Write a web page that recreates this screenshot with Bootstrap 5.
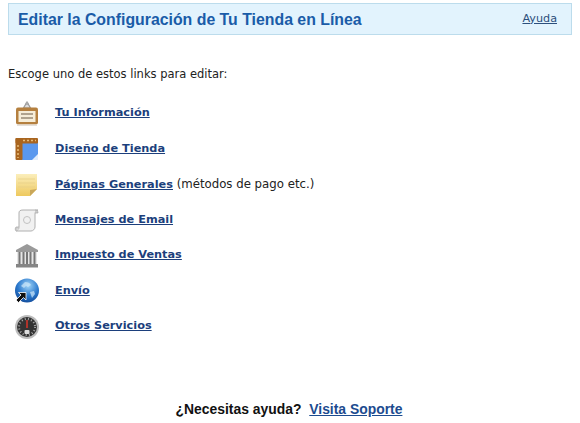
<!DOCTYPE html>
<html lang="en">
<head>
<meta charset="UTF-8">
<title>Editar la Configuración</title>
<link href="https://cdn.jsdelivr.net/npm/bootstrap@5.3.0/dist/css/bootstrap.min.css" rel="stylesheet">
<style>
body { font-family: "DejaVu Sans", sans-serif; font-size: 11.5px; color: #222; background: #fff; height: 423px; overflow: hidden; }
.page-wrap { padding: 3px 8px 0 8px; height: 423px; }
.head-box { height: 32px; background: #e2f3fd; border: 1px solid #bcdcec; padding: 0 14px 0 9px; }
.head-title { font-family: "Liberation Sans", sans-serif; font-weight: 700; font-size: 15.85px; color: #1a5ca8; margin: 0; }
.head-help { color: #2c4f7c; font-size: 11.2px; }
.intro { margin: 32px 0 0 0; line-height: 14px; }
.menu-list { margin-top: 15px; padding-left: 6px; }
.menu-row { height: 35.5px; gap: 15px; }
.menu-row svg { width: 26px; height: 26px; flex: none; }
.menu-link { font-weight: 700; font-size: 11.3px; color: #1c3f7c; }
.menu-note { font-size: 11.75px; }
.foot-line { margin-top: 54px; padding-right: 2px; font-family: "Liberation Sans", sans-serif; font-size: 13.9px; font-weight: 700; color: #111; text-align: center; }
.foot-line a { color: #1c4b8f; margin-left: 4px; }
</style>
</head>
<body>
<div class="page-wrap">
  <div class="head-box d-flex align-items-center justify-content-between">
    <h1 class="head-title">Editar la Configuración de Tu Tienda en Línea</h1>
    <a class="head-help" href="#">Ayuda</a>
  </div>
  <p class="intro">Escoge uno de estos links para editar:</p>
  <div class="menu-list">
    <div class="menu-row d-flex align-items-center">
      <svg viewBox="0 0 26 26">
        <path d="M13 1l-3.500 6h7z" fill="#ddd" stroke="#999" stroke-width="1.200"/>
        <circle cx="13" cy="2.500" r="1.600" fill="#aaa"/>
        <rect x="2" y="6.500" width="22" height="17" rx="2" fill="#b5803f"/>
        <rect x="4.500" y="10" width="17" height="11" fill="#f6edd8"/>
        <path d="M7 13h12M7 17h12" stroke="#6b5a44" stroke-width="1.200"/>
        <rect x="3" y="23.500" width="20" height="1.500" fill="#e4e0da"/>
      </svg>
      <a class="menu-link" href="#">Tu Información</a>
    </div>
    <div class="menu-row d-flex align-items-center">
      <svg viewBox="0 0 26 26">
        <rect x="7" y="6" width="17" height="18" fill="#5a98ee"/>
        <path d="M18 24l6-6v6z" fill="#e2edfb"/>
        <rect x="1.500" y="2" width="22.500" height="5.500" rx="1" fill="#a9651f"/>
        <rect x="1.500" y="2" width="7" height="22" rx="1" fill="#a9651f"/>
        <path d="M4 9v13M9 4.500h13" stroke="#e7bd7a" stroke-width="1.500" stroke-dasharray="2 2"/>
      </svg>
      <a class="menu-link" href="#">Diseño de Tienda</a>
    </div>
    <div class="menu-row d-flex align-items-center">
      <svg viewBox="0 0 26 26">
        <defs><linearGradient id="noteFill" x1="0" y1="0" x2="0" y2="1"><stop offset="0" stop-color="#fbeebb"/><stop offset="1" stop-color="#eec95e"/></linearGradient></defs>
        <path d="M2 2h21v15l-7 7H2z" fill="url(#noteFill)"/>
        <path d="M23 17l-7 7v-6z" fill="#c9a75a"/>
        <path d="M4 7h17M4 11h17M4 15h17" stroke="#e6cf86" stroke-width=".7"/>
      </svg>
      <span><a class="menu-link" href="#">Páginas Generales</a> <span class="menu-note">(métodos de pago etc.)</span></span>
    </div>
    <div class="menu-row d-flex align-items-center">
      <svg viewBox="0 0 26 26">
        <path d="M9 3h15c-2 1-3 2-3 4v13c0 2-2 4-4 4H2c2-1 3-2 3-4V6c0-2 1-3 4-3z" fill="#f1f1f1" stroke="#b0b0b0"/>
        <circle cx="13" cy="13" r="3.500" fill="none" stroke="#c2c2c2"/>
        <path d="M21 3c2 0 3 1 3 3h-3M2 24c-1-1-1-3 0-4h3" fill="#ccc" stroke="#a8a8a8" stroke-width=".7"/>
      </svg>
      <a class="menu-link" href="#">Mensajes de Email</a>
    </div>
    <div class="menu-row d-flex align-items-center">
      <svg viewBox="0 0 26 26">
        <path d="M13 1L24 7v2H2V7z" fill="#9a9a9a"/>
        <rect x="3" y="9" width="20" height="12" fill="#e6e6e6"/>
        <path d="M5.500 9v12M9.500 9v12M13 9v12M16.500 9v12M20.500 9v12" stroke="#777" stroke-width="2"/>
        <rect x="2" y="21" width="22" height="3.500" fill="#858585"/>
      </svg>
      <a class="menu-link" href="#">Impuesto de Ventas</a>
    </div>
    <div class="menu-row d-flex align-items-center">
      <svg viewBox="0 0 26 26">
        <defs><radialGradient id="globeFill" cx=".55" cy=".3" r=".8"><stop offset="0" stop-color="#9fd4f8"/><stop offset=".55" stop-color="#2a78cc"/><stop offset="1" stop-color="#0c3f8c"/></radialGradient></defs>
        <circle cx="13" cy="12.500" r="12" fill="url(#globeFill)"/>
        <path d="M11 4c3 0 5 1 6 3l-3 2-2-1-2 2-3-2zM16 14l4-1 1 3-3 4z" fill="#cfe8fa" opacity=".7"/>
        <path d="M2 22l5-5-2.500-2.500H12V22l-2.500-2.500-5 5z" fill="#111" stroke="#fff" stroke-width=".8"/>
      </svg>
      <a class="menu-link" href="#">Envío</a>
    </div>
    <div class="menu-row d-flex align-items-center">
      <svg viewBox="0 0 26 26">
        <circle cx="13" cy="13" r="12" fill="#bdbdbd"/>
        <circle cx="13" cy="13" r="10" fill="#333"/>
        <circle cx="13" cy="13" r="8" fill="none" stroke="#aaa" stroke-width="2" stroke-dasharray="1 2.200"/>
        <path d="M13 14V6" stroke="#d8352a" stroke-width="1.500"/>
        <rect x="10.500" y="16" width="5" height="4" rx="1" fill="#ddd"/>
      </svg>
      <a class="menu-link" href="#">Otros Servicios</a>
    </div>
  </div>
  <div class="foot-line">¿Necesitas ayuda? <a href="#">Visita Soporte</a></div>
</div>
<script src="https://cdn.jsdelivr.net/npm/bootstrap@5.3.0/dist/js/bootstrap.bundle.min.js"></script>
</body>
</html>
